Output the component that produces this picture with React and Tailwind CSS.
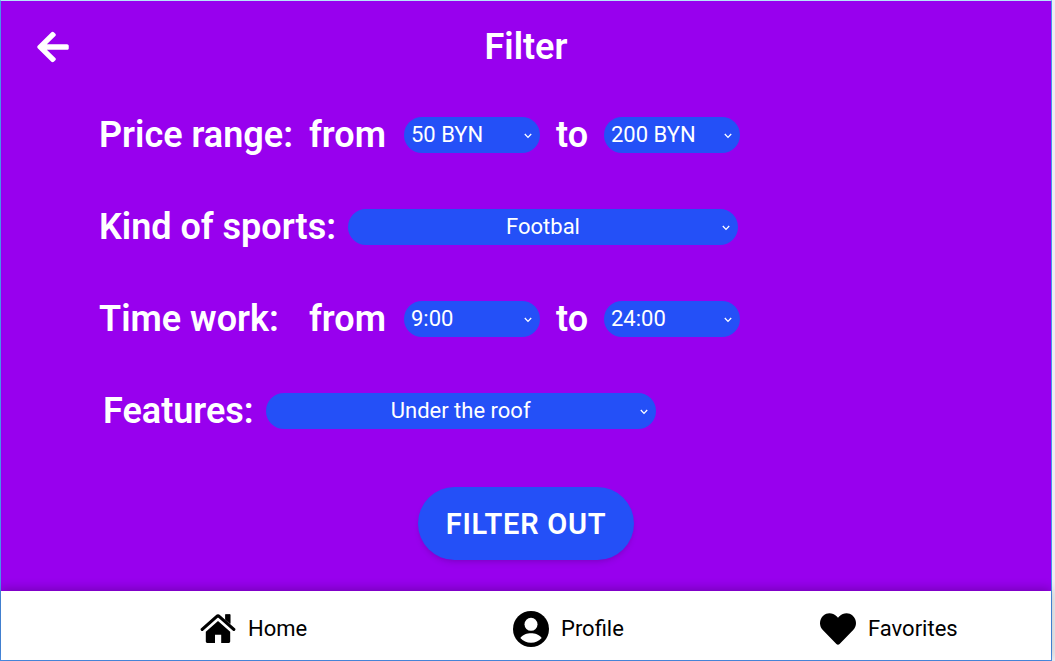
import React from "react";
import { FaArrowLeft, FaHeart } from "react-icons/fa";

function HomeIcon() {
  return (
    <svg viewBox="0 0 36 36" className="size-9" aria-hidden="true">
      <path d="M25.5 3.6h4.6v9l-4.6-4z" fill="black" stroke="black" strokeWidth="0.8" strokeLinejoin="round" />
      <path d="M2.2 18.4L16.6 5.6Q18 4.4 19.4 5.6L33.8 18.4" fill="none" stroke="black" strokeWidth="3.2" strokeLinecap="round" />
      <path d="M18 9.9L30.2 20.7V30.6Q30.2 32 28.8 32H21.2V23.8H15V32H7.2Q5.8 32 5.8 30.6V20.7Z" fill="black" />
    </svg>
  );
}

function ProfileIcon() {
  return (
    <svg viewBox="0 0 36 36" className="size-9" aria-hidden="true">
      <circle cx="18" cy="18" r="18" fill="black" />
      <circle cx="18" cy="13.3" r="6.5" fill="white" />
      <path d="M7.3 27C10 23.4 14 22.2 18 22.2S26 23.4 28.7 27C26 30.2 22.2 31.8 18 31.8S10 30.2 7.3 27Z" fill="white" />
    </svg>
  );
}

function Picker({ label, value, wide }) {
  return (
    <span className={wide ? "relative block w-[390px]" : "relative block w-34"}>
      <select
        aria-label={label}
        defaultValue={value}
        className={
          "block h-9 w-full appearance-none rounded-full bg-[#2450f7] text-[22px] leading-9 font-normal text-white outline-none " +
          (wide ? "text-center" : "px-[7px]")
        }
      >
        <option>{value}</option>
      </select>
      <svg viewBox="0 0 8 6" className="pointer-events-none absolute top-4 right-2 h-1.5 w-2" fill="none" stroke="white" strokeWidth="1.3" aria-hidden="true">
        <path d="M0.8 1L4 4.4L7.2 1" />
      </svg>
    </span>
  );
}

function Range({ title, from, to }) {
  return (
    <fieldset className="flex h-10 items-center">
      <legend className="float-left w-[210px]">{title}:</legend>
      <span className="w-[95px]">from</span>
      <Picker label={title + " from"} value={from} />
      <span className="w-16 text-center">to</span>
      <Picker label={title + " to"} value={to} />
    </fieldset>
  );
}

function NavLink({ href, icon, children }) {
  return (
    <a href={href} className="flex items-center gap-3">
      {icon}
      {children}
    </a>
  );
}

export default function App() {
  return (
    <div className="min-h-screen bg-[#eeeef2] pr-[3px] font-['Roboto',sans-serif]">
      <div className="flex min-h-screen flex-col border border-[#4a90ea] border-t-[#b5e3fa] bg-[#9800ee]">
        <header className="grid grid-cols-[1fr_auto_1fr] items-center px-[34px] pt-[21px] text-white">
          <button type="button" aria-label="Back" className="justify-self-start">
            <FaArrowLeft className="size-9" />
          </button>
          <h1 className="text-4xl leading-[50px] font-semibold">Filter</h1>
        </header>
        <form className="flex grow flex-col text-4xl leading-10 font-semibold text-white" onSubmit={(e) => e.preventDefault()}>
          <div className="flex flex-col gap-[52px] pt-[43px] pl-[98px]">
            <Range title="Price range" from="50 BYN" to="200 BYN" />
            <div className="flex h-10 items-center gap-3">
              <span>Kind of sports:</span>
              <Picker label="Kind of sports" value="Footbal" wide />
            </div>
            <Range title="Time work" from="9:00" to="24:00" />
            <div className="flex h-10 items-center gap-3 pl-1">
              <span>Features:</span>
              <Picker label="Features" value="Under the roof" wide />
            </div>
          </div>
          <button type="submit" className="mx-auto mt-14 mb-[30px] h-[73px] rounded-full bg-[#2450f7] px-7 text-[29px] font-semibold tracking-wide shadow-md">
            FILTER OUT
          </button>
        </form>
        <nav className="grid h-[69px] grid-cols-[199px_313px_307px_auto] items-center bg-white pt-1.5 text-[22px] text-black shadow-[0_-2px_10px_rgba(0,0,0,0.25)]">
          <span />
          <NavLink href="#home" icon={<HomeIcon />}>Home</NavLink>
          <NavLink href="#profile" icon={<ProfileIcon />}>Profile</NavLink>
          <NavLink href="#favorites" icon={<FaHeart className="size-9" />}>Favorites</NavLink>
        </nav>
      </div>
    </div>
  );
}
